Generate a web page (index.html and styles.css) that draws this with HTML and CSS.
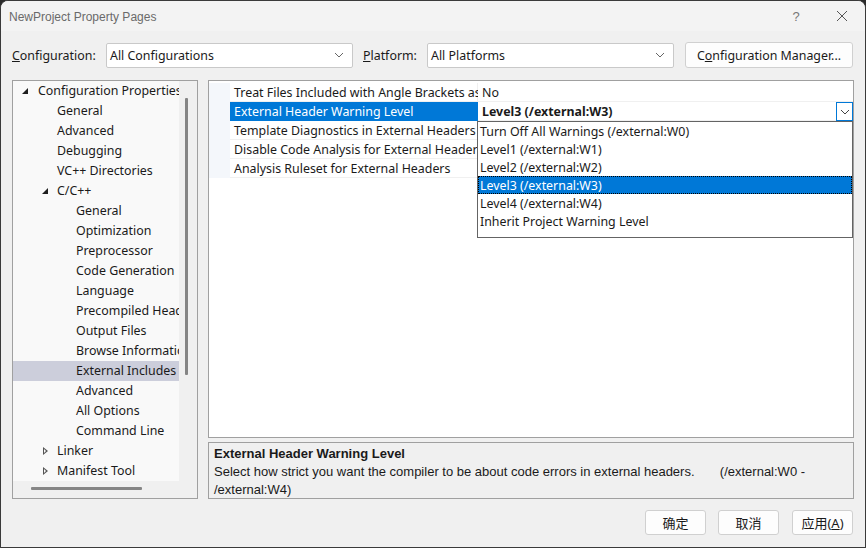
FILE: index.html
```html
<!DOCTYPE html>
<html>
<head>
<meta charset="utf-8">
<link rel="stylesheet" href="styles.css">
</head>
<body>
<div class="window">
  <div class="titlebar">
    <span class="title">NewProject Property Pages</span>
    <span class="tb-help">?</span>
    <span class="tb-close">
      <svg width="12" height="12" viewBox="0 0 12 12"><path d="M1 1L11 11M11 1L1 11" stroke="#555" stroke-width="1" fill="none"/></svg>
    </span>
  </div>
  <div class="content">
    <div class="config-row">
      <span class="lbl lbl-config"><u>C</u>onfiguration:</span>
      <div class="combo combo-config"><span>All Configurations</span><svg class="chev" width="10" height="6" viewBox="0 0 10 6"><path d="M1 1L5 5L9 1" stroke="#666" fill="none"/></svg></div>
      <span class="lbl lbl-plat"><u>P</u>latform:</span>
      <div class="combo combo-plat"><span>All Platforms</span><svg class="chev" width="10" height="6" viewBox="0 0 10 6"><path d="M1 1L5 5L9 1" stroke="#666" fill="none"/></svg></div>
      <button class="btn btn-cm">C<u>o</u>nfiguration Manager...</button>
    </div>
    <div class="main">
      <div class="tree">
        <div class="tree-inner">
          <div class="tree-items">
            <div class="ti l0"><span class="arr open"></span>Configuration Properties</div>
            <div class="ti l1">General</div>
            <div class="ti l1">Advanced</div>
            <div class="ti l1">Debugging</div>
            <div class="ti l1">VC++ Directories</div>
            <div class="ti l1a"><span class="arr open"></span>C/C++</div>
            <div class="ti l2">General</div>
            <div class="ti l2">Optimization</div>
            <div class="ti l2">Preprocessor</div>
            <div class="ti l2">Code Generation</div>
            <div class="ti l2">Language</div>
            <div class="ti l2">Precompiled Headers</div>
            <div class="ti l2">Output Files</div>
            <div class="ti l2">Browse Information</div>
            <div class="ti l2 sel">External Includes</div>
            <div class="ti l2">Advanced</div>
            <div class="ti l2">All Options</div>
            <div class="ti l2">Command Line</div>
            <div class="ti l1a"><span class="arr closed"></span>Linker</div>
            <div class="ti l1a"><span class="arr closed"></span>Manifest Tool</div>
          </div>
          <div class="vscroll"><div class="vthumb"></div></div>
        </div>
        <div class="hscroll"><div class="hthumb"></div></div>
      </div>
      <div class="right">
        <div class="grid">
          <div class="row"><div class="gut"></div><div class="name">Treat Files Included with Angle Brackets as External</div><div class="val">No</div></div>
          <div class="row active"><div class="gut"></div><div class="name">External Header Warning Level</div><div class="val bold">Level3 (/external:W3)<span class="ddbtn"><svg width="10" height="6" viewBox="0 0 10 6"><path d="M1 1L5 5L9 1" stroke="#444" fill="none"/></svg></span></div></div>
          <div class="row"><div class="gut"></div><div class="name">Template Diagnostics in External Headers</div><div class="val"></div></div>
          <div class="row"><div class="gut"></div><div class="name">Disable Code Analysis for External Headers</div><div class="val"></div></div>
          <div class="row"><div class="gut"></div><div class="name">Analysis Ruleset for External Headers</div><div class="val"></div></div>
          <div class="dropdown">
            <div class="opt">Turn Off All Warnings (/external:W0)</div>
            <div class="opt">Level1 (/external:W1)</div>
            <div class="opt">Level2 (/external:W2)</div>
            <div class="opt selopt">Level3 (/external:W3)</div>
            <div class="opt">Level4 (/external:W4)</div>
            <div class="opt">Inherit Project Warning Level</div>
          </div>
        </div>
        <div class="desc">
          <div class="desc-title">External Header Warning Level</div>
          <div class="desc-text">Select how strict you want the compiler to be about code errors in external headers.&nbsp;&nbsp;&nbsp;&nbsp;&nbsp;&nbsp;&nbsp;(/external:W0 - /external:W4)</div>
        </div>
      </div>
    </div>
    <div class="buttons">
      <button class="btn btn-b">确定</button>
      <button class="btn btn-b">取消</button>
      <button class="btn btn-b">应用(<u>A</u>)</button>
    </div>
  </div>
</div>
</body>
</html>
```

FILE: styles.css
```css
* { box-sizing: border-box; }
html, body { margin: 0; padding: 0; }
body {
  width: 866px; height: 548px; overflow: hidden;
  background: #2b2b2b;
  font-family: "Noto Sans", "Noto Sans CJK SC", sans-serif;
  font-size: 12.4px; color: #1a1a1a;
}
.window {
  width: 866px; height: 548px;
  background: #f0f0f0;
  border: 1px solid #3a3a3a;
  border-radius: 8px 8px 0 0;
  overflow: hidden;
  display: flex; flex-direction: column;
}
.titlebar {
  height: 30px; flex: none;
  display: flex; align-items: center;
  background: #f3f3f3;
  padding-left: 8px;
}
.title { font-size: 12px; color: #6a6a6a; flex: 1; font-family: "Liberation Sans", sans-serif; padding-top: 1px; }
.tb-help { width: 46px; text-align: center; color: #777; font-size: 13px; font-family: "Liberation Sans", sans-serif; }
.tb-close { width: 46px; display: flex; justify-content: center; }
.content { flex: 1; display: flex; flex-direction: column; padding: 0 11px 0 11px; }
.config-row { display: flex; align-items: center; height: 26px; margin-top: 11px; }
.lbl { color: #1a1a1a; }
.lbl-config { width: 94px; }
.lbl-plat { width: 64px; }
.combo {
  height: 25px; background: #fff;
  border: 1px solid #c9c9c9; border-radius: 2px;
  display: flex; align-items: center; justify-content: space-between;
  padding: 0 8px 0 3px;
}
.combo-config { width: 247px; margin-right: 10px; }
.combo-plat { width: 247px; margin-right: 11px; }
.chev { flex: none; }
.btn {
  font-family: "Noto Sans", "Noto Sans CJK SC", sans-serif;
  font-size: 12.4px; color: #1a1a1a;
  background: #fdfdfd;
  border: 1px solid #d0d0d0; border-radius: 3px;
  padding: 0; height: 25px;
}
.btn-cm { width: 168px; height: 26px; }
.main { display: flex; margin-top: 12px; height: 419px; }
.tree {
  width: 186px; flex: none;
  border: 1px solid #a0a0a0;
  background: #f0f0f0;
  display: flex; flex-direction: column;
}
.tree-inner { flex: 1; display: flex; min-height: 0; }
.tree-items { width: 166px; background: #f9f9f9; overflow: hidden; }
.ti { height: 20px; line-height: 20px; white-space: nowrap; overflow: hidden; position: relative; }
.ti.l0 { padding-left: 25px; }
.ti.l1 { padding-left: 44px; }
.ti.l1a { padding-left: 44px; }
.ti.l2 { padding-left: 63px; }
.ti.sel { background: #cccedb; }
.arr { position: absolute; top: 0; width: 10px; height: 20px; }
.l0 .arr { left: 8px; }
.l1a .arr { left: 28px; }
.arr.open::before {
  content: ""; position: absolute; left: 1px; top: 7px;
  border-right: 6px solid #1e1e1e; border-top: 6px solid transparent;
}
.arr.closed::before {
  content: ""; position: absolute; left: 2px; top: 6px;
  width: 0; height: 0;
  border-left: 5px solid #555; border-top: 4px solid transparent; border-bottom: 4px solid transparent;
}
.arr.closed::after {
  content: ""; position: absolute; left: 3px; top: 8px;
  width: 0; height: 0;
  border-left: 2.5px solid #f9f9f9; border-top: 2px solid transparent; border-bottom: 2px solid transparent;
}
.vscroll { flex: 1; position: relative; }
.vthumb { position: absolute; left: 6px; top: 17px; width: 3px; height: 277px; background: #858585; border-radius: 1px; }
.hscroll { height: 17px; flex: none; position: relative; }
.hthumb { position: absolute; left: 18px; top: 6px; width: 111px; height: 3px; background: #858585; border-radius: 1px; }
.right { flex: 1; margin-left: 10px; display: flex; flex-direction: column; }
.grid {
  height: 358px; flex: none;
  border: 1px solid #a0a0a0;
  background: #fff;
  position: relative;
  padding-top: 2px;
}
.row { display: flex; height: 19px; line-height: 19px; box-shadow: inset 0 -1px 0 #f0f0f0; }
.gut { width: 21px; flex: none; background: #f4f7fb; }
.name { width: 248px; flex: none; padding-left: 4px; white-space: nowrap; overflow: hidden; box-shadow: inset -1px -1px 0 #f0f0f0; }
.val { flex: 1; padding-left: 4px; white-space: nowrap; position: relative; }
.val.bold { font-weight: bold; }
.row.active .name { background: #0078d7; color: #fff; box-shadow: none; }
.ddbtn {
  position: absolute; right: 0; top: 0; width: 17px; height: 19px;
  border: 1px solid #0078d7; background: #fff;
  display: flex; align-items: center; justify-content: center;
}
.dropdown {
  position: absolute; left: 268px; top: 40px;
  width: 376px; height: 117px;
  background: #fff; border: 1px solid #646464;
}
.opt { height: 18px; line-height: 19px; padding-left: 2px; white-space: nowrap; }
.opt.selopt { background: #0078d7; color: #fff; outline: 1px dotted #000; outline-offset: -1px; }
.desc {
  margin-top: 4px; height: 57px;
  border: 1px solid #a0a0a0;
  background: #f0f0f0;
  padding: 2px 5px;
  font-family: "Liberation Sans", sans-serif; font-size: 13px;
  line-height: 18px;
}
.desc-title { font-weight: bold; }
.buttons { display: flex; justify-content: flex-end; gap: 12px; margin-top: 11px; padding-right: 1px; }
.btn-b { width: 61px; height: 25px; font-size: 13px; }
.buttons .btn-b:last-child { margin-left: 1px; }
```
